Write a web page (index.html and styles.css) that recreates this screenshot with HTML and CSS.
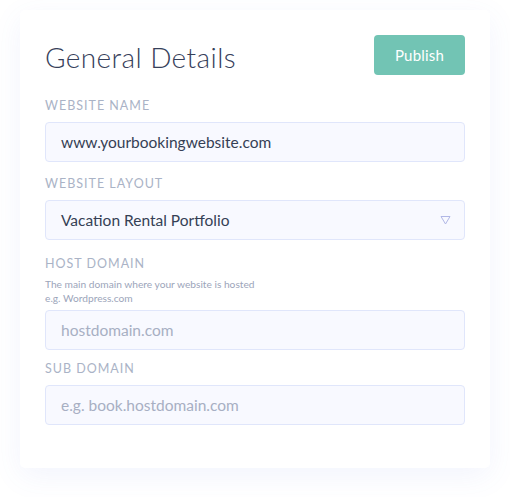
FILE: index.html
```html
<!DOCTYPE html>
<html>
<head>
<meta charset="utf-8">
<link rel="stylesheet" href="styles.css">
</head>
<body>
<div class="card">
  <div class="header">
    <h1 class="title">General Details</h1>
    <button class="publish">Publish</button>
  </div>
  <div class="fields">
    <div class="field">
      <label class="label">Website Name</label>
      <div class="input">www.yourbookingwebsite.com</div>
    </div>
    <div class="field">
      <label class="label">Website Layout</label>
      <div class="input select">
        <span>Vacation Rental Portfolio</span>
        <svg class="caret" width="11" height="10" viewBox="0 0 11 10"><path d="M1 1.5 H10 L5.5 9 Z" fill="none" stroke="#b1b7e6" stroke-width="1" stroke-linejoin="round"/></svg>
      </div>
    </div>
    <div class="field field-host">
      <label class="label">Host Domain</label>
      <p class="help">The main domain where your website is hosted<br>e.g. Wordpress.com</p>
      <div class="input placeholder">hostdomain.com</div>
    </div>
    <div class="field field-sub">
      <label class="label">Sub Domain</label>
      <div class="input placeholder">e.g. book.hostdomain.com</div>
    </div>
  </div>
</div>
</body>
</html>
```
FILE: styles.css
```css
html, body {
  margin: 0;
  padding: 0;
  background: #ffffff;
}
body {
  font-family: Lato, "Noto Sans", sans-serif;
  padding: 10px 20px 0 20px;
  min-height: 497px;
  box-sizing: border-box;
}
.card {
  width: 470px;
  box-sizing: border-box;
  background: #ffffff;
  border-radius: 5px;
  padding: 25px 25px 43px 25px;
  box-shadow: 0 8px 30px rgba(90, 110, 230, 0.08);
}
.header {
  display: flex;
  justify-content: space-between;
  align-items: center;
  height: 40px;
}
.title {
  margin: 0;
  font-size: 28px;
  font-weight: 300;
  color: #36405a;
  letter-spacing: 0.4px;
  line-height: 40px;
  position: relative;
  top: 2px;
}
.publish {
  width: 91px;
  height: 40px;
  border: none;
  border-radius: 4px;
  background: #72c4b4;
  color: #ffffff;
  font-family: Lato, "Noto Sans", sans-serif;
  font-size: 15px;
  font-weight: 400;
  letter-spacing: 0.2px;
  padding: 0;
}
.fields {
  display: flex;
  flex-direction: column;
  gap: 14px;
  margin-top: 23px;
}
.field {
  display: flex;
  flex-direction: column;
}
.field-host {
  margin-top: 2px;
}
.field-sub {
  margin-top: -3px;
}
.label {
  display: block;
  font-size: 12.5px;
  line-height: 16px;
  letter-spacing: 1px;
  text-transform: uppercase;
  color: #aab3c6;
  margin-bottom: 8px;
}
.help {
  margin: -3px 0 5px 0;
  font-size: 10.2px;
  line-height: 14px;
  color: #9ca5ba;
}
.input {
  height: 40px;
  box-sizing: border-box;
  border: 1px solid #e0e6fb;
  border-radius: 4px;
  background: #f8f9ff;
  padding: 0 15px;
  display: flex;
  align-items: center;
  font-size: 15.5px;
  color: #353f55;
}
.select {
  justify-content: space-between;
  padding-right: 13px;
}
.caret {
  display: block;
}
.placeholder {
  color: #a7afc3;
}
```
